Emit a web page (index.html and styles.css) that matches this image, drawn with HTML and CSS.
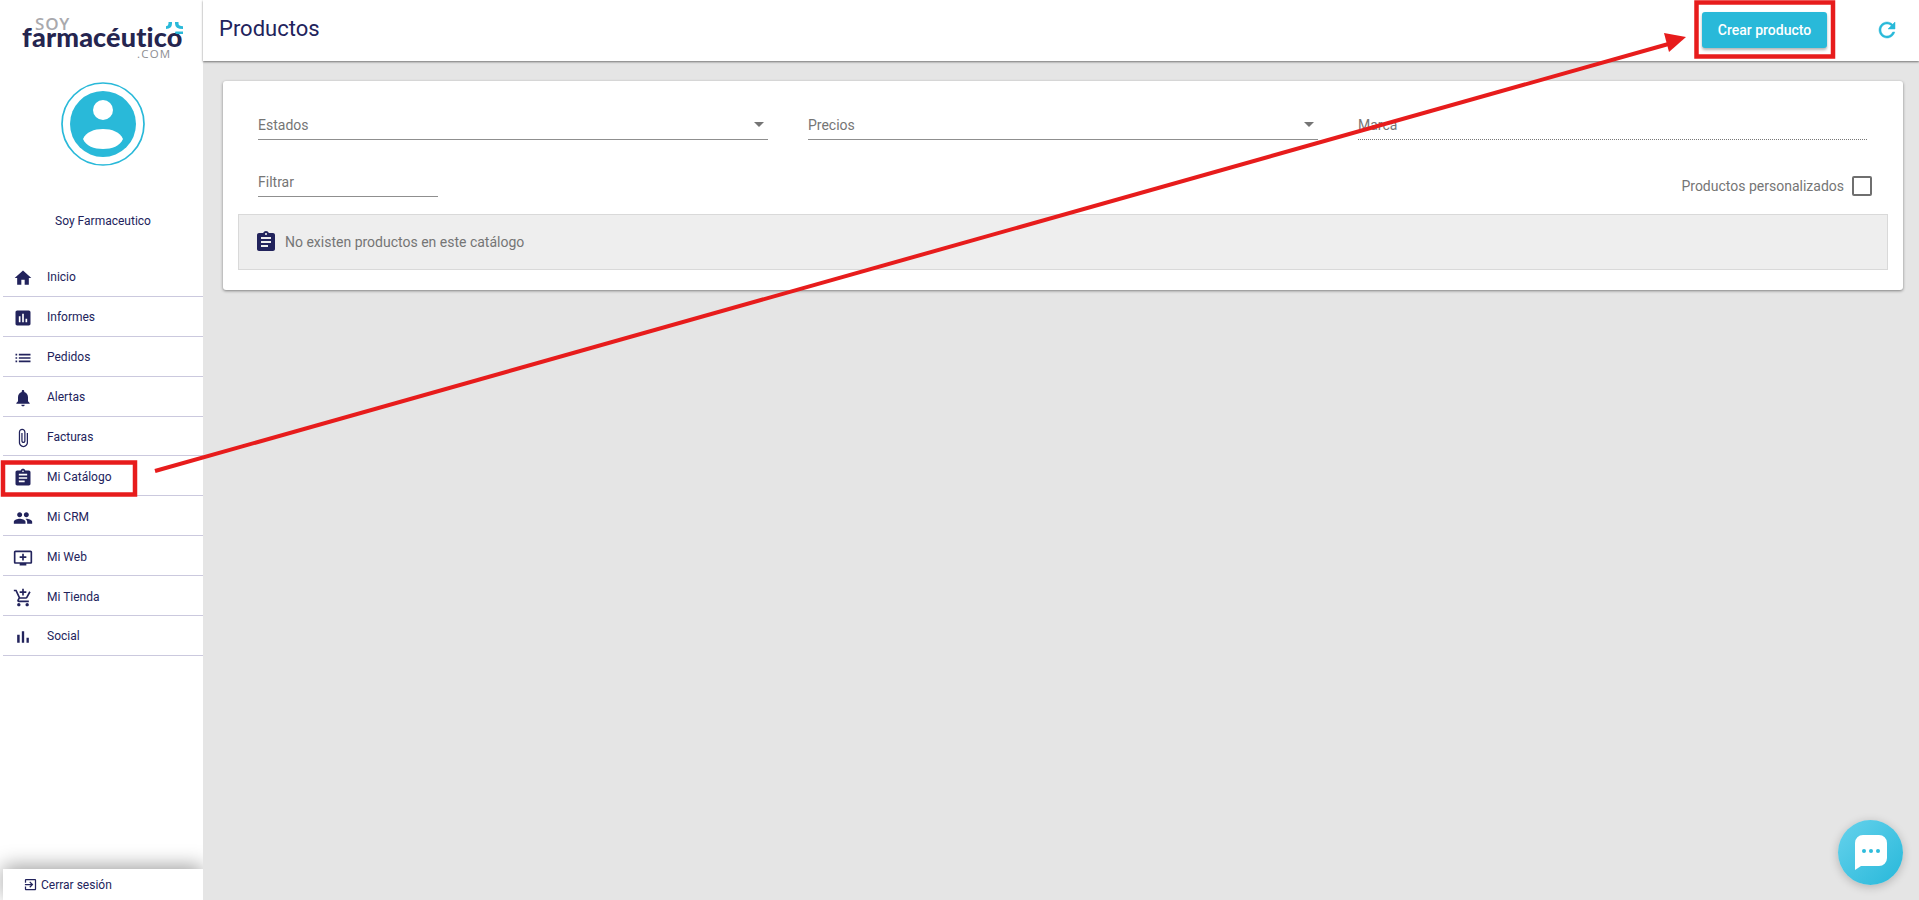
FILE: index.html
```html
<!DOCTYPE html>
<html lang="es">
<head>
<meta charset="utf-8">
<title>Productos</title>
<link rel="stylesheet" href="styles.css">
</head>
<body>
<div class="app">
  <aside class="sidebar">
    <div class="logo">
      <span class="logo-soy">SOY</span>
      <span class="logo-main">farmacéutico</span>
      <span class="logo-com">.COM</span>
      <svg class="logo-mark" viewBox="0 0 18 14"><path d="M3.500 0h3.500v1.500q0 5-6 5.500V4.200q2.500-.2 2.500-2.700zM10 0h3.500v1.500q0 2.700 4.500 2.700V7q-8 0-8-5.500zM10 10q0-.6 1-.6h7V12h-5q-3 0-3-2z" fill="#29b9d9"/></svg>
    </div>
    <div class="avatar">
      <svg viewBox="0 0 84 84" width="84" height="84"><circle cx="42" cy="42" r="41" fill="none" stroke="#29b9d9" stroke-width="1.700"/><circle cx="42" cy="42" r="33" fill="#29b9d9"/><circle cx="42" cy="28" r="10" fill="#fff"/><path d="M22 57c3-7 11-10 20-10s17 3 20 10c-3 7-11 10-20 10s-17-3-20-10z" fill="#fff"/></svg>
    </div>
    <div class="user-name">Soy Farmaceutico</div>
    <nav class="nav">
      <a class="nav-item"><svg class="nav-icon" viewBox="0 0 24 24"><path d="M10 20v-6h4v6h5v-8h3L12 3 2 12h3v8z"/></svg>Inicio</a>
      <a class="nav-item"><svg class="nav-icon" viewBox="0 0 24 24"><path d="M19 3H5c-1.100 0-2 .9-2 2v14c0 1.100.9 2 2 2h14c1.100 0 2-.9 2-2V5c0-1.100-.9-2-2-2zM9 17H7v-7h2v7zm4 0h-2V7h2v10zm4 0h-2v-4h2v4z"/></svg>Informes</a>
      <a class="nav-item"><svg class="nav-icon" viewBox="0 0 24 24"><path d="M3 13h2v-2H3v2zm0 4h2v-2H3v2zm0-8h2V7H3v2zm4 4h14v-2H7v2zm0 4h14v-2H7v2zM7 7v2h14V7H7z"/></svg>Pedidos</a>
      <a class="nav-item"><svg class="nav-icon" viewBox="0 0 24 24"><path d="M12 22c1.100 0 2-.9 2-2h-4c0 1.100.89 2 2 2zm6-6v-5c0-3.070-1.640-5.640-4.500-6.320V4c0-.83-.67-1.500-1.500-1.500s-1.500.67-1.500 1.500v.68C7.630 5.360 6 7.920 6 11v5l-2 2v1h16v-1l-2-2z"/></svg>Alertas</a>
      <a class="nav-item"><svg class="nav-icon" viewBox="0 0 24 24"><path d="M16.500 6v11.500c0 2.210-1.790 4-4 4s-4-1.790-4-4V5c0-1.380 1.120-2.500 2.500-2.500s2.500 1.120 2.500 2.500v10.500c0 .55-.45 1-1 1s-1-.45-1-1V6H10v9.500c0 1.380 1.120 2.500 2.500 2.500s2.500-1.120 2.500-2.500V5c0-2.210-1.790-4-4-4S7 2.790 7 5v12.500c0 3.040 2.460 5.500 5.500 5.500s5.500-2.460 5.500-5.500V6h-1.500z"/></svg>Facturas</a>
      <a class="nav-item"><svg class="nav-icon" viewBox="0 0 24 24"><path d="M19 3h-4.180C14.400 1.840 13.300 1 12 1c-1.300 0-2.400.84-2.820 2H5c-1.100 0-2 .9-2 2v14c0 1.100.9 2 2 2h14c1.100 0 2-.9 2-2V5c0-1.100-.9-2-2-2zm-7 0c.55 0 1 .45 1 1s-.45 1-1 1-1-.45-1-1 .45-1 1-1zm2 14H7v-2h7v2zm3-4H7v-2h10v2zm0-4H7V7h10v2z"/></svg>Mi Catálogo</a>
      <a class="nav-item"><svg class="nav-icon" viewBox="0 0 24 24"><path d="M16 11c1.660 0 2.990-1.340 2.990-3S17.660 5 16 5c-1.660 0-3 1.340-3 3s1.340 3 3 3zm-8 0c1.660 0 2.990-1.340 2.990-3S9.660 5 8 5C6.340 5 5 6.340 5 8s1.340 3 3 3zm0 2c-2.330 0-7 1.170-7 3.500V19h14v-2.500c0-2.330-4.670-3.500-7-3.500zm8 0c-.29 0-.62.02-.97.05 1.160.84 1.970 1.970 1.970 3.450V19h6v-2.500c0-2.330-4.670-3.500-7-3.500z"/></svg>Mi CRM</a>
      <a class="nav-item"><svg class="nav-icon" viewBox="0 0 24 24"><path d="M21 3H3c-1.110 0-2 .89-2 2v12c0 1.100.89 2 2 2h5v2h8v-2h5c1.100 0 1.990-.9 1.990-2L23 5c0-1.110-.9-2-2-2zm0 14H3V5h18v12zm-5-7v2h-3v3h-2v-3H8v-2h3V7h2v3h3z"/></svg>Mi Web</a>
      <a class="nav-item"><svg class="nav-icon" viewBox="0 0 24 24"><path d="M11 9h2V6h3V4h-3V1h-2v3H8v2h3v3zm-4 9c-1.100 0-1.990.9-1.990 2S5.900 22 7 22s2-.9 2-2-.9-2-2-2zm10 0c-1.100 0-1.990.9-1.990 2s.89 2 1.990 2 2-.9 2-2-.9-2-2-2zm-9.830-3.250l.03-.12.9-1.630h7.450c.75 0 1.410-.41 1.750-1.030l3.860-7.010L19.420 4h-.01l-1.100 2-2.760 5H8.530l-.13-.27L6.160 6l-.95-2-.94-2H1v2h2l3.600 7.590-1.350 2.450c-.16.28-.25.61-.25.96 0 1.100.9 2 2 2h12v-2H7.420c-.13 0-.25-.11-.25-.25z"/></svg>Mi Tienda</a>
      <a class="nav-item"><svg class="nav-icon" viewBox="0 0 24 24"><path d="M5 9.200h3V19H5zM10.600 5h2.800v14h-2.800zm5.600 8H19v6h-2.800z"/></svg>Social</a>
    </nav>
    <div class="logout">
      <svg class="logout-icon" viewBox="0 0 24 24"><path d="M10.090 15.590L11.500 17l5-5-5-5-1.410 1.410L12.670 11H3v2h9.670l-2.580 2.590zM19 3H5c-1.110 0-2 .9-2 2v4h2V5h14v14H5v-4H3v4c0 1.100.89 2 2 2h14c1.100 0 2-.9 2-2V5c0-1.100-.9-2-2-2z"/></svg>
      Cerrar sesión
    </div>
  </aside>
  <div class="main">
    <header class="topbar">
      <h1 class="title">Productos</h1>
      <button class="btn-primary">Crear producto</button>
      <svg class="refresh" viewBox="0 0 24 24"><path d="M17.650 6.350C16.200 4.900 14.210 4 12 4c-4.420 0-7.990 3.580-7.990 8s3.570 8 7.990 8c3.730 0 6.840-2.550 7.730-6h-2.080c-.82 2.330-3.040 4-5.650 4-3.310 0-6-2.690-6-6s2.690-6 6-6c1.660 0 3.140.69 4.220 1.780L13 11h7V4l-2.350 2.350z"/></svg>
    </header>
    <section class="card">
      <div class="filters">
        <div class="field"><span>Estados</span><i class="caret"></i></div>
        <div class="field"><span>Precios</span><i class="caret"></i></div>
        <div class="field field-disabled"><span>Marca</span></div>
      </div>
      <div class="filters-row">
        <div class="field field-short"><span>Filtrar</span></div>
        <label class="check"><span>Productos personalizados</span><i class="check-box"></i></label>
      </div>
      <div class="alert">
        <svg class="alert-icon" viewBox="0 0 24 24"><path d="M19 3h-4.180C14.400 1.840 13.300 1 12 1c-1.300 0-2.400.84-2.820 2H5c-1.100 0-2 .9-2 2v14c0 1.100.9 2 2 2h14c1.100 0 2-.9 2-2V5c0-1.100-.9-2-2-2zm-7 0c.55 0 1 .45 1 1s-.45 1-1 1-1-.45-1-1 .45-1 1-1zm2 14H7v-2h7v2zm3-4H7v-2h10v2zm0-4H7V7h10v2z"/></svg>
        No existen productos en este catálogo
      </div>
    </section>
  </div>
</div>
<button class="chat" aria-label="Chat">
  <svg viewBox="0 0 32 35" width="32" height="35"><path d="M8 0h16a8 8 0 0 1 8 8v15a8 8 0 0 1-8 8H6L0 35V8a8 8 0 0 1 8-8z" fill="#fff"/><circle cx="9" cy="16" r="2" fill="#2fbcdc"/><circle cx="16" cy="16" r="2" fill="#2fbcdc"/><circle cx="23" cy="16" r="2" fill="#2fbcdc"/></svg>
</button>
<svg class="annotations" viewBox="0 0 1919 900" width="1919" height="900">
  <rect x="3" y="462.500" width="132" height="32" class="mark"/>
  <rect x="1696.500" y="2.500" width="136.500" height="54" class="mark"/>
  <path d="M155 471L1672 43" class="arrow-line"/>
  <path d="M1686 37L1664 33L1669 52z" class="arrow-head"/>
</svg>
</body>
</html>
```
FILE: styles.css
```css
* { box-sizing: border-box; }
html, body { margin: 0; height: 100%; overflow: hidden; }
body { font-family: Roboto, "Liberation Sans", sans-serif; background: #e5e5e5; color: #22235c; }
.app { display: flex; height: 900px; }

.sidebar { width: 203px; flex: none; background: #fff; display: flex; flex-direction: column; overflow: hidden; }
.logo { position: relative; height: 82px; }
.logo-soy { position: absolute; left: 35px; top: 20px; font: 600 17px/8px "Open Sans", sans-serif; color: #a9a9ad; letter-spacing: .8px; }
.logo-main { position: absolute; left: 22px; top: 28px; font: 900 27px/18px Lato, sans-serif; color: #25254f; letter-spacing: .15px; }
.logo-com { position: absolute; left: 137px; top: 50px; font: 400 11.500px/8px "Open Sans", sans-serif; color: #8e8e92; letter-spacing: 1.200px; }
.logo-mark { position: absolute; left: 165px; top: 22px; width: 18px; height: 14px; }
.avatar { height: 84px; display: flex; justify-content: center; margin-left: 3px; }
.avatar svg { display: block; }
.user-name { margin-top: 47px; font-size: 12px; line-height: 16px; text-align: center; margin-left: 3px; }
.nav { margin: 28px 0 0 3px; flex: 1; }
.nav-item { display: flex; align-items: center; height: 39.900px; padding: 2px 0 0 10px; font-size: 12px; border-bottom: 1px solid #cbc9de; }
.nav-icon { width: 20px; height: 20px; margin-right: 14px; fill: #22235c; position: relative; top: 1px; }
.logout { margin-left: 3px; height: 31px; background: #fff; display: flex; align-items: center; padding: 0 0 0 20px; font-size: 12px; gap: 3px; box-shadow: 0 -3px 20px rgba(0,0,0,.38); position: relative; }
.logout-icon { width: 15px; height: 15px; fill: #22235c; }

.main { flex: 1; min-width: 0; }
.topbar { height: 61px; background: #fff; display: flex; align-items: center; padding: 0 20px 2px 16px; box-shadow: 0 1px 2px rgba(0,0,0,.5); position: relative; }
.title { flex: 1; margin: 0 0 2px; font-size: 22px; font-weight: 400; color: #22235c; }
.btn-primary { width: 125px; height: 36px; border: 0; border-radius: 3px; background: #29b9d9; color: #fff; font: 500 14px Roboto, sans-serif; box-shadow: 0 2px 3px rgba(0,0,0,.3); margin-right: 48px; }
.refresh { width: 24px; height: 24px; fill: #29b9d9; stroke: #29b9d9; stroke-width: .5px; }

.card { margin: 20px 16px 0 20px; height: 209px; padding: 27px 15px 0 15px; background: #fff; border-radius: 3px; box-shadow: 0 1px 3px rgba(0,0,0,.45); }
.filters { display: grid; grid-template-columns: 510px 510px 509px; gap: 40px; padding-left: 20px; }
.filters-row { display: flex; justify-content: space-between; align-items: flex-end; padding: 0 16px 0 20px; margin-top: 25px; }
.field { position: relative; height: 32px; display: flex; align-items: center; justify-content: space-between; font-size: 14px; color: #757575; border-bottom: 1px solid #8f8f8f; padding: 2px 4px 0 0; }
.field-disabled { border-bottom: 1px dotted #777; }
.field-short { width: 180px; }
.caret { width: 0; height: 0; border: 5.500px solid transparent; border-top: 5.500px solid #757575; border-bottom: 0; }
.check { display: flex; align-items: center; gap: 8px; font-size: 14px; color: #757575; padding-bottom: 1px; }
.check-box { width: 20px; height: 20px; border: 2px solid #6f6f6f; border-radius: 2px; }
.alert { margin-top: 17px; height: 56px; background: #eee; border: 1px solid #d9d9d9; display: flex; align-items: center; gap: 7px; padding-left: 15px; font-size: 14px; color: #757575; }
.alert-icon { width: 24px; height: 24px; fill: #22235c; }

.chat { position: absolute; left: 1838px; top: 820px; width: 65px; height: 65px; border: 0; border-radius: 50%; padding: 0; display: flex; align-items: center; justify-content: center; background: linear-gradient(135deg, #66d2ec, #27b8da); box-shadow: 0 2px 10px rgba(0,0,0,.22); }
.annotations { position: absolute; left: 0; top: 0; pointer-events: none; }
.mark { fill: none; stroke: #e71c1c; stroke-width: 4.500px; }
.arrow-line { fill: none; stroke: #e71c1c; stroke-width: 4px; }
.arrow-head { fill: #e71c1c; }
```
